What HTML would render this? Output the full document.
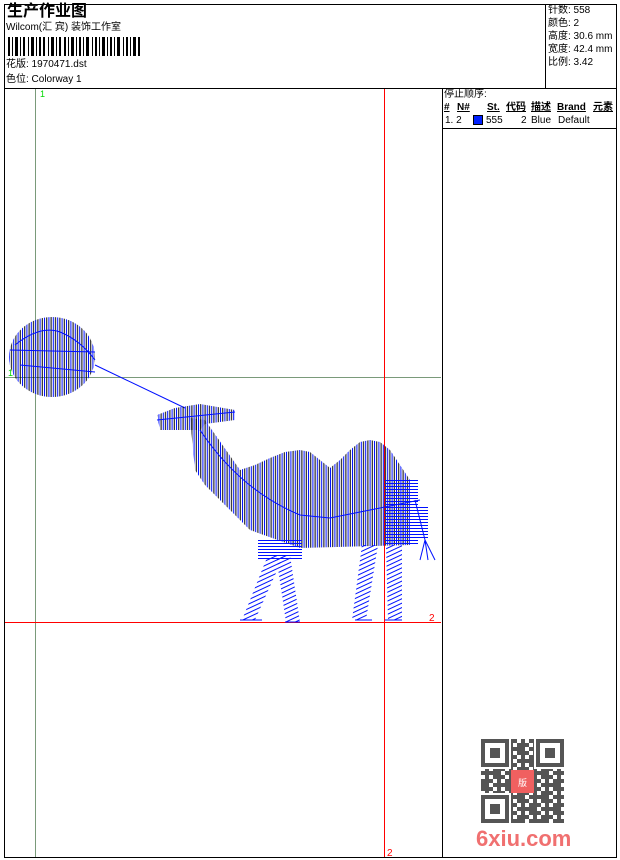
<!DOCTYPE html>
<html><head><meta charset="utf-8"><style>
*{margin:0;padding:0}
body{width:620px;height:860px;background:#fff;position:relative;overflow:hidden;font-family:"Liberation Sans","Noto Sans CJK SC",sans-serif;font-size:10px;color:#000}
.a{position:absolute;white-space:nowrap;line-height:12px}
.b{position:absolute;background:#000}
.u{font-weight:bold;text-decoration:underline}
</style></head><body>
<div class="b" style="left:4px;top:4px;width:613px;height:1px"></div>
<div class="b" style="left:4px;top:857px;width:613px;height:1px"></div>
<div class="b" style="left:4px;top:4px;width:1px;height:854px"></div>
<div class="b" style="left:616px;top:4px;width:1px;height:854px"></div>
<div class="b" style="left:4px;top:88px;width:613px;height:1px"></div>
<div class="b" style="left:545px;top:4px;width:1px;height:84px"></div>
<div class="b" style="left:442px;top:88px;width:1px;height:770px"></div>
<div class="b" style="left:442px;top:128px;width:175px;height:1px"></div>

<div class="a" style="left:7px;top:2px;font-size:16px;line-height:20px;font-weight:bold">生产作业图</div>
<div class="a" style="left:6px;top:22px">Wilcom(汇 宾) 装饰工作室</div>
<svg class="a" style="left:8px;top:37px" width="135" height="20">
<g fill="#000">
<rect x="0" y="0" width="2" height="19"/><rect x="4" y="0" width="1" height="19"/><rect x="7" y="0" width="3" height="19"/><rect x="12" y="0" width="1" height="19"/><rect x="15" y="0" width="2" height="19"/><rect x="20" y="0" width="1" height="19"/><rect x="23" y="0" width="3" height="19"/><rect x="28" y="0" width="1" height="19"/><rect x="31" y="0" width="2" height="19"/><rect x="35" y="0" width="2" height="19"/><rect x="40" y="0" width="1" height="19"/><rect x="43" y="0" width="3" height="19"/><rect x="48" y="0" width="1" height="19"/><rect x="51" y="0" width="2" height="19"/><rect x="56" y="0" width="2" height="19"/><rect x="60" y="0" width="1" height="19"/><rect x="63" y="0" width="3" height="19"/><rect x="68" y="0" width="1" height="19"/><rect x="71" y="0" width="2" height="19"/><rect x="75" y="0" width="1" height="19"/><rect x="78" y="0" width="3" height="19"/><rect x="84" y="0" width="1" height="19"/><rect x="87" y="0" width="2" height="19"/><rect x="91" y="0" width="1" height="19"/><rect x="94" y="0" width="3" height="19"/><rect x="99" y="0" width="1" height="19"/><rect x="102" y="0" width="2" height="19"/><rect x="106" y="0" width="1" height="19"/><rect x="109" y="0" width="3" height="19"/><rect x="115" y="0" width="1" height="19"/><rect x="118" y="0" width="2" height="19"/><rect x="122" y="0" width="1" height="19"/><rect x="125" y="0" width="3" height="19"/><rect x="130" y="0" width="2" height="19"/>
</g></svg>
<div class="a" style="left:6px;top:59px">花版: 1970471.dst</div>
<div class="a" style="left:6px;top:74px">色位: Colorway 1</div>

<div class="a" style="left:548px;top:5px">针数: 558</div>
<div class="a" style="left:548px;top:18px">颜色: 2</div>
<div class="a" style="left:548px;top:31px">高度: 30.6 mm</div>
<div class="a" style="left:548px;top:44px">宽度: 42.4 mm</div>
<div class="a" style="left:548px;top:57px">比例: 3.42</div>

<div class="a" style="left:444px;top:89px">停止顺序:</div>
<div class="a u" style="left:444px;top:102px">#</div>
<div class="a u" style="left:457px;top:102px">N#</div>
<div class="a u" style="left:487px;top:102px">St.</div>
<div class="a u" style="left:506px;top:102px">代码</div>
<div class="a u" style="left:531px;top:102px">描述</div>
<div class="a u" style="left:557px;top:102px">Brand</div>
<div class="a u" style="left:593px;top:102px">元素</div>
<div class="a" style="left:445px;top:115px">1. 2</div>
<div class="a" style="left:473px;top:115px;width:10px;height:10px;background:#0020ff;border:1px solid #000;box-sizing:border-box"></div>
<div class="a" style="left:486px;top:115px">555</div>
<div class="a" style="left:521px;top:115px">2</div>
<div class="a" style="left:531px;top:115px">Blue</div>
<div class="a" style="left:558px;top:115px">Default</div>

<svg class="a" style="left:0;top:0" width="620" height="860">
<defs>
<pattern id="pv" width="4.4" height="10" patternUnits="userSpaceOnUse">
<rect x="0" y="0" width="1" height="10" fill="#0010ff"/><rect x="2.2" y="0" width="1" height="10" fill="#000"/>
</pattern>
<pattern id="ph" width="10" height="3" patternUnits="userSpaceOnUse">
<rect x="0" y="0" width="10" height="1" fill="#0010ff"/>
</pattern>
<pattern id="pd" width="6" height="4" patternUnits="userSpaceOnUse" patternTransform="rotate(-25)">
<rect x="0" y="0" width="6" height="1" fill="#0010ff"/>
</pattern>
</defs>
<line x1="35.5" y1="89" x2="35.5" y2="857" stroke="#7a9a7a"/>
<line x1="5" y1="377.5" x2="441" y2="377.5" stroke="#7a9a7a"/>
<line x1="384.5" y1="89" x2="384.5" y2="857" stroke="#f00"/>
<line x1="5" y1="622.5" x2="441" y2="622.5" stroke="#f00"/>
<text x="40" y="97" fill="#00d800" font-size="9" font-family="Liberation Sans">1</text>
<text x="8" y="376" fill="#00d800" font-size="9" font-family="Liberation Sans">1</text>
<text x="429" y="621" fill="#f00" font-size="10" font-family="Liberation Sans">2</text>
<text x="387" y="856" fill="#f00" font-size="10" font-family="Liberation Sans">2</text>

<ellipse cx="52" cy="357" rx="43" ry="40" fill="url(#pv)"/>
<path d="M10 350 L95 352 M15 345 Q40 325 60 332 Q80 340 95 360 M20 365 L95 372" stroke="#0010ff" fill="none"/>
<line x1="95" y1="365" x2="185" y2="408" stroke="#0010ff"/>
<path d="M157 415 L175 408 L200 404 L235 410 L235 420 L205 424 L200 430 L160 430 Z" fill="url(#pv)"/>
<path d="M157 420 L235 412" stroke="#0010ff"/>
<path d="M190 418 L205 420 L240 470 L255 465 L270 458 L285 452 L300 450 L310 452 L320 460 L330 468 L340 460 L350 450 L360 442 L370 440 L380 442 L390 450 L400 465 L410 480 L410 545 L300 548 L250 530 L225 505 L205 485 L195 470 Z" fill="url(#pv)"/>
<path d="M200 430 Q240 490 300 515 L330 518 L420 500" stroke="#0010ff" fill="none"/>
<rect x="385" y="478" width="33" height="67" fill="url(#ph)"/>
<rect x="258" y="538" width="44" height="22" fill="url(#ph)"/>
<path d="M268 555 L284 555 L255 620 L242 620 Z" fill="url(#pd)"/>
<path d="M276 555 L290 555 L300 622 L286 622 Z" fill="url(#pd)"/>
<path d="M362 545 L378 545 L366 620 L352 620 Z" fill="url(#pd)"/>
<path d="M386 545 L402 545 L402 620 L388 620 Z" fill="url(#pd)"/>
<path d="M240 620 L262 620 M285 622 L300 622 M355 620 L372 620 M385 620 L402 620" stroke="#0010ff"/>
<path d="M415 500 L425 540 L435 560 M425 540 L420 560 M425 540 L428 560" stroke="#0010ff" fill="none"/>
<rect x="412" y="505" width="16" height="35" fill="url(#ph)"/>
</svg>

<svg class="a" style="left:481px;top:739px" width="83" height="84">
<defs>
<pattern id="q1" width="8" height="8" patternUnits="userSpaceOnUse"><rect width="4" height="4" fill="#555"/><rect x="4" y="4" width="4" height="4" fill="#555"/></pattern>
<pattern id="q2" width="12" height="12" patternUnits="userSpaceOnUse"><rect x="4" width="4" height="8" fill="#555"/><rect y="8" width="8" height="4" fill="#555"/></pattern>
</defs>
<rect width="83" height="84" fill="url(#q1)"/>
<rect width="83" height="84" fill="url(#q2)"/>
<rect width="30" height="30" fill="#fff"/><rect x="53" width="30" height="30" fill="#fff"/><rect y="54" width="30" height="30" fill="#fff"/>
<g fill="none" stroke="#555" stroke-width="4"><rect x="2" y="2" width="24" height="24"/><rect x="57" y="2" width="24" height="24"/><rect x="2" y="58" width="24" height="24"/></g>
<g fill="#555"><rect x="9" y="9" width="10" height="10"/><rect x="64" y="9" width="10" height="10"/><rect x="9" y="65" width="10" height="10"/></g>
<rect x="30" y="31" width="23" height="23" fill="#f06060"/>
<text x="41.5" y="47" font-size="9" text-anchor="middle" fill="#fff" font-family="Noto Sans CJK SC">版</text>
</svg>
<div class="a" style="left:476px;top:826px;font-size:22px;line-height:26px;font-weight:bold;color:#f07070">6xiu.com</div>
</body></html>
